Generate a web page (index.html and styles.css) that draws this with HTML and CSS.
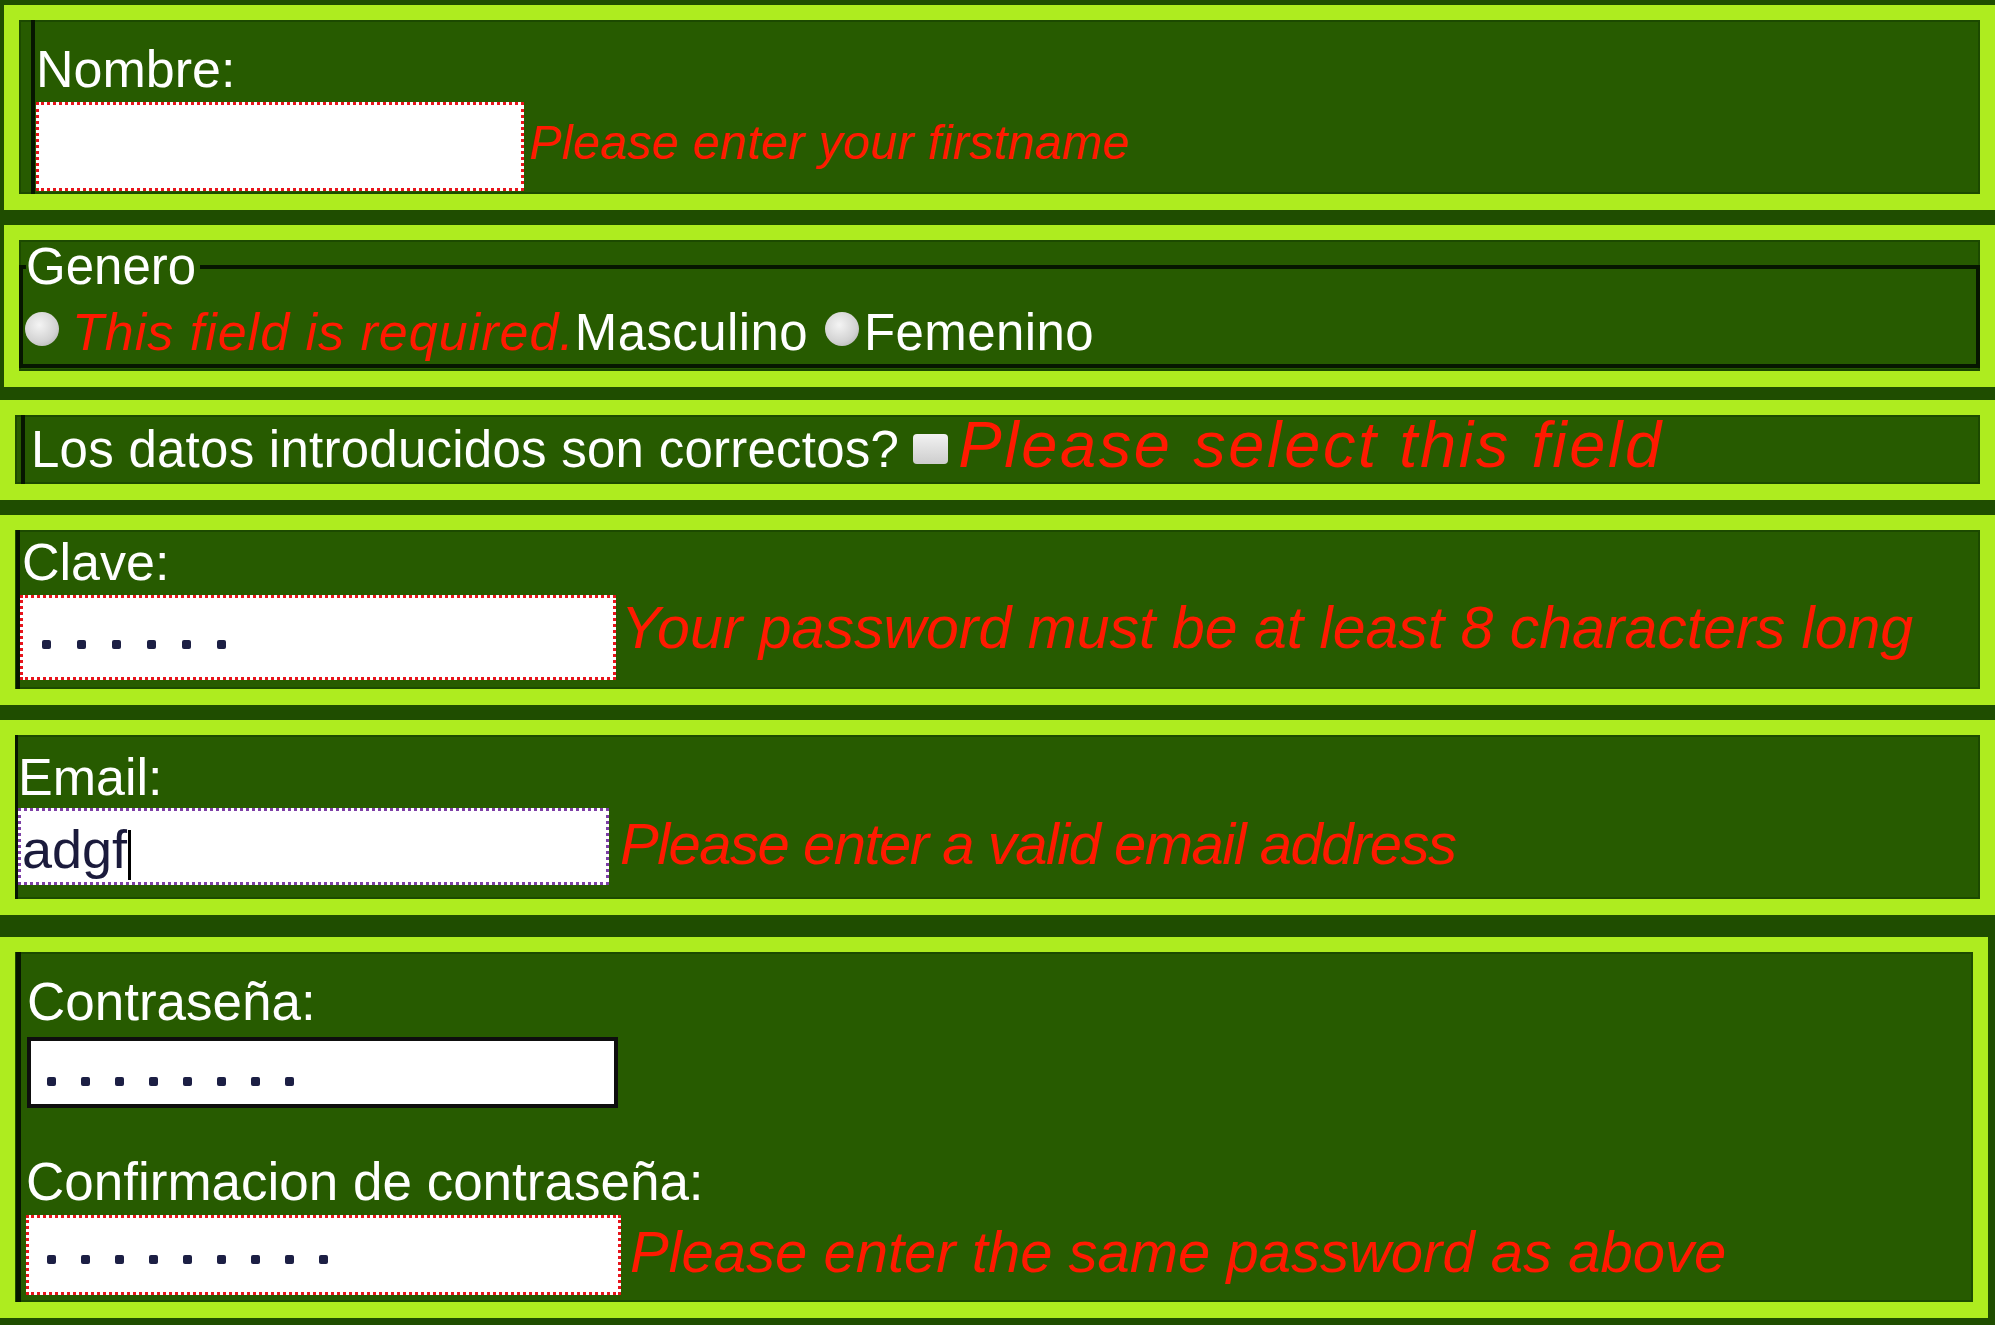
FILE: index.html
```html
<!DOCTYPE html>
<html lang="es">
<head>
<meta charset="utf-8">
<title>Formulario</title>
<link rel="stylesheet" href="styles.css">
</head>
<body>
<div class="row r1">
  <div class="inner">
    <label class="lbl">Nombre:</label>
    <div class="field">
      <div class="input bad"></div>
      <span class="error">Please enter your firstname</span>
    </div>
  </div>
</div>

<div class="row r2">
  <fieldset class="gender">
    <legend>Genero</legend>
    <div class="opts"><span class="radio first"></span><em class="error">This field is required.</em>Masculino<span class="radio second"></span>Femenino</div>
  </fieldset>
</div>

<div class="row r3">
  <div class="inner"><span class="question">Los datos introducidos son correctos?</span><span class="check"></span><em class="error">Please select this field</em></div>
</div>

<div class="row r4">
  <div class="inner">
    <label class="lbl">Clave:</label>
    <div class="field">
      <div class="input bad pw"><span class="dot"></span><span class="dot"></span><span class="dot"></span><span class="dot"></span><span class="dot"></span><span class="dot"></span></div>
      <span class="error">Your password must be at least 8 characters long</span>
    </div>
  </div>
</div>

<div class="row r5">
  <div class="inner">
    <label class="lbl">Email:</label>
    <div class="field">
      <div class="input focus"><span class="typed">adgf<span class="caret"></span></span></div>
      <span class="error">Please enter a valid email address</span>
    </div>
  </div>
</div>

<div class="row r6">
  <div class="inner">
    <label class="lbl first-lbl">Contraseña:</label>
    <div class="input solid pw in1"><span class="dot"></span><span class="dot"></span><span class="dot"></span><span class="dot"></span><span class="dot"></span><span class="dot"></span><span class="dot"></span><span class="dot"></span></div>
    <label class="lbl second-lbl">Confirmacion de contraseña:</label>
    <div class="field">
      <div class="input bad pw in2"><span class="dot"></span><span class="dot"></span><span class="dot"></span><span class="dot"></span><span class="dot"></span><span class="dot"></span><span class="dot"></span><span class="dot"></span><span class="dot"></span></div>
      <span class="error">Please enter the same password as above</span>
    </div>
  </div>
</div>
</body>
</html>
```

FILE: styles.css
```css
html, body {
  margin: 0;
  padding: 0;
}
body {
  width: 1995px;
  height: 1325px;
  overflow: hidden;
  background: #1f4d00;
  font-family: "Liberation Sans", Arial, sans-serif;
  color: #ffffff;
}

.row {
  box-sizing: border-box;
  border: 15px solid #aeec1f;
  border-bottom-width: 16px;
  background: #275b00;
  box-shadow: inset 0 0 0 2px #1c4a00;
}
.r1 { margin: 5px 0 0 4px; height: 205px; }
.r2 { margin: 15px 0 0 4px; height: 162px; }
.r3 { margin: 13px 0 0 0; height: 100px; }
.r4 { margin: 15px 0 0 0; height: 190px; }
.r5 { margin: 15px 0 0 0; height: 195px; }
.r6 { margin: 22px 7px 0 0; height: 381px; }

.inner {
  box-sizing: border-box;
  height: 100%;
  border-left: 4px solid #061600;
}

.lbl {
  display: block;
  font-size: 52px;
  line-height: 60px;
  white-space: nowrap;
}

.field {
  display: flex;
  align-items: flex-start;
}

.input {
  box-sizing: border-box;
  flex: none;
  background: #ffffff;
}
.input.bad { border: 3px dotted #e8141c; }
.input.focus { border: 3px dotted #7d3fa6; }
.input.solid { border: 4px solid #0e0e0e; }

.pw {
  display: flex;
  align-items: flex-start;
}
.dot {
  flex: none;
  width: 9px;
  height: 9px;
  border-radius: 2px;
  background: #1c1f44;
}

.error {
  color: #ff1a00;
  font-style: italic;
  white-space: nowrap;
}

/* row 1 */
.r1 .inner { margin-left: 12px; padding: 19px 0 0 1px; }
.r1 .input { width: 488px; height: 89px; margin-top: 3px; }
.r1 .error { font-size: 48px; line-height: 56px; margin: 16px 0 0 5px; letter-spacing: 0.5px; }

/* row 2 */
.gender {
  margin: 0 0 4px 0;
  border: 4px solid #061600;
  padding: 0 0 1px 3px;
  min-width: 0;
}
.gender legend {
  font-size: 51px;
  line-height: 54px;
  padding: 0 4px 0 0;
}
.opts {
  font-size: 51px;
  line-height: 60px;
  margin-top: 8px;
  white-space: nowrap;
  letter-spacing: 0.4px;
}
.radio {
  display: inline-block;
  width: 34px;
  height: 34px;
  border-radius: 50%;
  background: radial-gradient(circle at 42% 38%, #f4f4f4 0%, #d2d2d2 60%, #a4a4a4 100%);
  margin-bottom: 4px;
}
.radio.first { margin: 0 13px 4px -1px; }
.radio.second { margin: 0 5px 4px 17px; }
.opts .error { font-size: 52px; letter-spacing: 1px; }

/* row 3 */
.r3 .inner {
  margin-left: 6px;
  padding: 5px 0 0 6px;
  font-size: 51px;
  line-height: 60px;
  white-space: nowrap;
}
.question { letter-spacing: 0.25px; }
.check {
  display: inline-block;
  width: 35px;
  height: 30px;
  border-radius: 4px;
  background: linear-gradient(#f2f2f2, #cdcdcd);
  margin: 0 0 3px 14px;
}
.r3 .error { font-size: 65px; line-height: 50px; letter-spacing: 2.6px; margin-left: 10px; }

/* row 4 */
.r4 .inner { margin-left: 1px; padding: 2px 0 0 0; }
.r4 .lbl { margin-left: 2px; }
.r4 .input { width: 596px; height: 85px; margin-top: 3px; padding: 42px 0 0 19px; gap: 26px; }
.r4 .error { font-size: 59px; line-height: 64px; margin: 4px 0 0 5px; }

/* row 5 */
.r5 .inner { border-left-width: 3px; padding: 12px 0 0 0; }
.r5 .input { width: 591px; height: 77px; margin-top: 1px; padding: 3px 0 0 1px; }
.typed {
  display: block;
  font-size: 54px;
  line-height: 70px;
  color: #1b1b3c;
  white-space: nowrap;
}
.caret {
  display: inline-block;
  width: 3px;
  height: 50px;
  background: #000000;
  vertical-align: -12px;
  margin-left: 1px;
}
.r5 .error { font-size: 58px; line-height: 62px; margin: 6px 0 0 11px; letter-spacing: -1.5px; }

/* row 6 */
.r6 .inner { margin-left: 1px; border-left-width: 5px; padding: 20px 0 0 5px; }
.r6 .lbl { font-size: 53px; }
.r6 .first-lbl { margin-left: 1px; }
.r6 .second-lbl { margin-top: 44px; }
.in1 { width: 591px; height: 71px; margin: 5px 0 0 1px; padding: 36px 0 0 16px; gap: 25px; }
.in2 { width: 595px; height: 80px; margin-top: 3px; padding: 37px 0 0 18px; gap: 25px; }
.r6 .error { font-size: 58px; line-height: 62px; margin: 9px 0 0 9px; }
```
